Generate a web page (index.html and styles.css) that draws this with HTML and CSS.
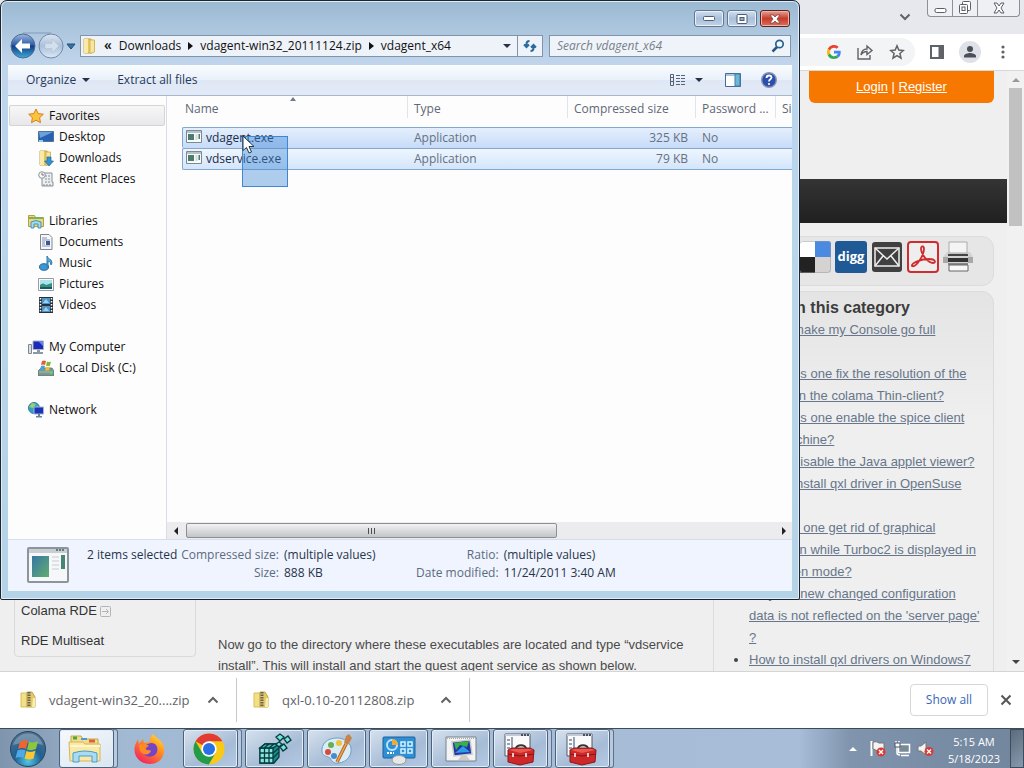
FILE: index.html
```html
<!DOCTYPE html>
<html lang="en">
<head>
<meta charset="utf-8">
<title>vdagent_x64</title>
<link rel="stylesheet" href="styles.css">
</head>
<body>
<div class="desktop">
  <main class="browser">
    <header class="tabstrip">
      <button class="tab-search" aria-label="Search tabs"><svg width="12" height="8" viewBox="0 0 12 8"><path d="M1.500 1.500 6 6l4.500-4.500" fill="none" stroke="#5f6368" stroke-width="2"/></svg></button>
      <div class="caption-chrome">
        <button aria-label="Minimize"><svg width="13" height="16" viewBox="0 0 13 16"><rect x="1" y="8.500" width="11" height="4" rx="1.500" fill="#fff" stroke="#5a5f68"/></svg></button>
        <button aria-label="Restore"><svg width="14" height="16" viewBox="0 0 14 16"><g fill="#fff" stroke="#5a5f68"><rect x="4.500" y="1.500" width="8" height="9" rx="1"/><rect x="1.500" y="4.500" width="8" height="9" rx="1"/><rect x="4" y="7" width="3" height="3.500"/></g></svg></button>
        <button aria-label="Close"><svg width="14" height="16" viewBox="0 0 14 16"><path d="M2 3h3l2 3 2-3h3L9 8l3 5H9l-2-3-2 3H2l3-5z" fill="#fff" stroke="#5a5f68"/></svg></button>
      </div>
    </header>
    <div class="toolbar">
      <div class="omnibox">
        <button aria-label="Google"><svg width="14" height="14" viewBox="0 0 48 48"><path fill="#ea4335" d="M24 9.500c3.500 0 6.700 1.200 9.200 3.600l6.900-6.900A24 24 0 0 0 2.600 13.200l8 6.200A14 14 0 0 1 24 9.500z"/><path fill="#4285f4" d="M47 24.500c0-1.600-.2-3.100-.4-4.500H24v9h13a11 11 0 0 1-4.800 7.200l7.700 6c4.500-4.200 7.100-10.400 7.100-17.700z"/><path fill="#fbbc05" d="M10.500 28.600a14 14 0 0 1 0-9.200l-8-6.200a24 24 0 0 0 0 21.600z"/><path fill="#34a853" d="M24 48c6.500 0 11.900-2.100 15.900-5.800l-7.700-6a14.500 14.500 0 0 1-21.700-7.600l-8 6.200A24 24 0 0 0 24 48z"/></svg></button>
        <button aria-label="Share"><svg width="18" height="18" viewBox="0 0 18 18" fill="none" stroke="#5f6368" stroke-width="1.400"><path d="M2 5v11h12v-4M5 12c.5-4 3-6 6-6V3l5 4.500-5 4v-3c-3 0-4.500 1-6 3.500z"/></svg></button>
        <button aria-label="Bookmark"><svg width="16" height="16" viewBox="0 0 16 16"><path d="m8 1.800 1.800 4.300 4.600.4-3.500 3 1.100 4.600L8 11.600l-4 2.500 1.100-4.600-3.500-3 4.600-.4z" fill="none" stroke="#5f6368" stroke-width="1.500"/></svg></button>
      </div>
      <button class="tool" aria-label="Side panel"><svg width="14" height="14" viewBox="0 0 14 14"><path d="M1 1h12v12H1z" fill="none" stroke="#5f6368" stroke-width="2"/><path d="M8.500 1H13v12H8.500z" fill="#5f6368"/></svg></button>
      <button class="tool avatar" aria-label="Profile"><svg width="14" height="14" viewBox="0 0 14 14" fill="#4a4e57"><circle cx="7" cy="4" r="3"/><path d="M1 12.500V11c0-2 4-3 6-3s6 1 6 3v1.500z"/></svg></button>
      <button class="tool" aria-label="Menu"><svg width="4" height="14" viewBox="0 0 4 14" fill="#5f6368"><circle cx="2" cy="2" r="1.600"/><circle cx="2" cy="7" r="1.600"/><circle cx="2" cy="12" r="1.600"/></svg></button>
    </div>
    <div class="viewport">
      <div class="page">
        <div class="site-head"><div class="login"><a href="#">Login</a> | <a href="#">Register</a></div></div>
        <div class="site-nav"></div>
        <div class="columns">
          <nav class="side-menu"><a href="#">Colama RDE <svg width="11" height="11" viewBox="0 0 11 11" fill="none" stroke="#b4b4b4"><rect x=".5" y=".5" width="10" height="10" rx="1"/><path d="M2 5.500h6M6 3l2.500 2.500L6 8"/></svg></a><a href="#">RDE Multiseat</a></nav>
          <article class="article"><p>Now go to the directory where these executables are located and type “vdservice<br>install”. This will install and start the guest agent service as shown below.</p></article>
          <aside class="aside">
            <div class="share">
              <a href="#" aria-label="Delicious"><svg width="32" height="32" viewBox="0 0 32 32"><rect width="32" height="32" rx="3" fill="#d5d3d1"/><path d="M0 16V3a3 3 0 0 1 3-3h13v16z" fill="#fff"/><path d="M16 0h13a3 3 0 0 1 3 3v13H16z" fill="#4a8ae0"/><path d="M0 16h16v16H3a3 3 0 0 1-3-3z" fill="#222"/><rect x=".5" y=".5" width="31" height="31" rx="3" fill="none" stroke="#999" opacity=".5"/></svg></a>
              <a class="digg" href="#">digg</a>
              <a href="#" aria-label="Email"><svg width="32" height="32" viewBox="0 0 32 32"><rect x="1" y="1" width="30" height="30" rx="3" fill="#404040"/><g fill="none" stroke="#eee" stroke-width="1.500"><rect x="4" y="7" width="24" height="18"/><path d="m4 7 12 11L28 7M4 25l8-10M28 25l-8-10"/></g></svg></a>
              <a href="#" aria-label="PDF"><svg width="32" height="32" viewBox="0 0 32 32" fill="none" stroke="#d02c30"><rect x="1" y="1" width="30" height="30" rx="3" fill="#eee" stroke-width="2"/><path d="M5 25c-1-3 9-7 17-7 7 0 7 4 4 4-5 0-12-9-12-14 0-4 3-3 3 0 0 6-8 19-12 17z" stroke-width="1.800"/></svg></a>
              <a href="#" aria-label="Print"><svg width="32" height="32" viewBox="0 0 32 32"><path d="M4 11h23l3 5v6H0v-6z" fill="#d2d2d2"/><path d="M0 16h5v6H0zM25 16h5v6h-5z" fill="#a8a8a8"/><path d="M6 1h18v11H6z" fill="#f4f4f4" stroke="#aaa"/><path d="M5 13h20v2H5z" fill="#444"/><path d="M5 17h20v4H5z" fill="#333"/><path d="M5 22h20v2H5z" fill="#888"/><path d="M6 24h19v6H6z" fill="#f8f8f8" stroke="#666"/></svg></a>
            </div>
            <section class="category">
              <h2>More in this category</h2>
              <ul>
                <li><a href="#">How to make my Console go full<br>screen?</a></li>
                <li><a href="#">How does one fix the resolution of the<br>screen on the colama Thin-client?</a></li>
                <li><a href="#">How does one enable the spice client<br>on a machine?</a></li>
                <li><a href="#">How to disable the Java applet viewer?</a></li>
                <li><a href="#">How to install qxl driver in OpenSuse<br>Linux?</a></li>
                <li><a href="#">How can one get rid of graphical<br>corruption while Turboc2 is displayed in<br>full screen mode?</a></li>
                <li><a href="#">Why the new changed configuration<br>data is not reflected on the 'server page'<br>?</a></li>
                <li><a href="#">How to install qxl drivers on Windows7</a></li>
              </ul>
            </section>
          </aside>
        </div>
      </div>
      <div class="page-scroll"><i class="arrow up"></i><div class="page-thumb"></div><i class="arrow down"></i></div>
    </div>
    <footer class="downloads">
      <div class="download"><svg class="zip" width="16" height="18"><use href="#zip"/></svg><span>vdagent-win32_20....zip</span><button aria-label="Options"><svg width="12" height="8" viewBox="0 0 12 8"><path d="M1.500 6.500 6 2l4.500 4.500" fill="none" stroke="#5f6368" stroke-width="2"/></svg></button></div>
      <div class="download"><svg class="zip" width="16" height="18"><use href="#zip"/></svg><span>qxl-0.10-20112808.zip</span><button aria-label="Options"><svg width="12" height="8" viewBox="0 0 12 8"><path d="M1.500 6.500 6 2l4.500 4.500" fill="none" stroke="#5f6368" stroke-width="2"/></svg></button></div>
      <button class="show-all">Show all</button>
      <button class="close-bar" aria-label="Close downloads"><svg width="12" height="12" viewBox="0 0 12 12"><path d="m1.500 1.500 9 9m0-9-9 9" stroke="#555" stroke-width="2"/></svg></button>
    </footer>
  </main>

  <footer class="taskbar">
    <button class="start" aria-label="Start"><svg width="38" height="38" viewBox="0 0 38 38"><defs><radialGradient id="orb" cx=".5" cy=".85" r=".85"><stop offset="0" stop-color="#4fc8e8"/><stop offset=".45" stop-color="#1f6193"/><stop offset="1" stop-color="#53728f"/></radialGradient></defs><circle cx="19" cy="19" r="17.500" fill="url(#orb)" stroke="#28445f"/><path d="M4 15a15.500 15.500 0 0 1 30 0q-15-5-30 0z" fill="#fff" opacity=".25"/><path d="M11 12q4-3 8-1l-2 8q-4-2-8 0z" fill="#f1642c"/><path d="M20 11.500q4 2 9-.5l-2 8q-4 2-9 .5z" fill="#8cc63f"/><path d="M8.500 20.500q4-2 8 0l-2 7.500q-4-2-8 0z" fill="#4fa9e8"/><path d="M17.500 21q5 2 9-.5l-2 8q-4 2-9 0z" fill="#fbc730"/></svg></button>
    <button class="task open stacked" aria-label="Explorer"><svg width="36" height="32" viewBox="0 0 36 32"><path d="M4 3h10l2 3h15v10H4z" fill="#f1dc8c" stroke="#c9a84c"/><path d="M6 5h4" stroke="#4ba83f" stroke-width="3"/><path d="M14 6h6" stroke="#4a9bd9" stroke-width="2"/><path d="M22 8h6" stroke="#d9633c" stroke-width="3"/><path d="M2 9h14l2 2h15v17H3z" fill="#f9e9a3" stroke="#d6b759"/><path d="M3 13h30" stroke="#fff6cf" stroke-width="2"/><path d="M6 29v-9q12-4 24 0v9h-5v-6H12v6z" fill="#a9dcf4" stroke="#4a9bc9"/></svg></button>
    <button class="task plain" aria-label="Firefox"><svg width="32" height="32" viewBox="0 0 32 32"><defs><linearGradient id="fox" x1="1" y1="0" x2=".3" y2="1"><stop offset="0" stop-color="#fff04a"/><stop offset=".4" stop-color="#ff9a20"/><stop offset="1" stop-color="#f3265c"/></linearGradient></defs><path d="M20 1c2 3 7 5 10 10 4 11-3 20-13 20C6 31-2 21 3 10l2-4 1 5 4-5 1 4 6-1c-1-3 1-6 3-8z" fill="url(#fox)"/><path d="M15 11c6-3 11 2 9 8-2 5-10 7-14 1 4 1 7-1 8-3-3 1-6-1-8-3 1-2 3-3 5-3z" fill="#7244c8"/><path d="M6 12q6-3 10 1c-3 1-4 3-3 4l5 1c-2 5-8 4-11 0" fill="#ff8b25"/></svg></button>
    <button class="task stacked" aria-label="Chrome"><svg width="32" height="32" viewBox="0 0 32 32"><circle cx="16" cy="16" r="15.500" fill="#f9c916"/><path d="M16 16 2.500 8.300A15.500 15.500 0 0 1 29.500 8.300H16z" fill="#e13d32"/><path d="M2.500 8.300A15.500 15.500 0 0 0 15.800 31.500L22.500 20 16 16 9.300 20z" fill="#239b4d"/><circle cx="16" cy="16" r="7.700" fill="#fff"/><circle cx="16" cy="16" r="6" fill="#2870e4"/></svg></button>
    <button class="task" aria-label="Registry Editor"><svg width="34" height="32" viewBox="0 0 34 32" stroke="#083b3d" stroke-width="1.300"><path d="M2 15l5-4h14v13l-5 6H2z" fill="#178d8d"/><path d="M2 15h13v15H2z" fill="#83e7df"/><path d="M6.500 15v15M11 15v15M2 20h13M2 25h13"/><path d="m2 15 5-4h14l-6 4zM15 20l6-5M15 25l6-6M6 15l5-4M11 15l5-4" fill="#45bcb8"/><path d="m18 4 4-3 4 3-4 4zM26 6l4-3 3 4-4 3zM22 14l4-3 3 4-4 3zM18 11l3-2 3 2-3 3z" fill="#76e4df"/></svg></button>
    <button class="task" aria-label="Paint"><svg width="36" height="32" viewBox="0 0 36 32"><path d="M18 5C8 5 2 11 3 19c1 5 6 4 8 6 2 3 3 6 9 5 8-1 13-8 12-15-1-6-7-10-14-10z" fill="#dcecf6" stroke="#6ba1c4"/><circle cx="9" cy="19" r="3" fill="#d84b39"/><circle cx="12" cy="12" r="3" fill="#65af54"/><circle cx="20" cy="10" r="3" fill="#efc33c"/><circle cx="15" cy="23" r="3" fill="#438ccd"/><path d="m18 29 9-18" stroke="#b26628" stroke-width="3.500"/><path d="m18 29 9-18" stroke="#f1a850" stroke-width="1.500"/><path d="m25 10 2-7 3-2 3 4-4 7z" fill="#c88448"/></svg></button>
    <button class="task" aria-label="Control Panel"><svg width="36" height="32" viewBox="0 0 36 32"><rect x="2" y="4" width="32" height="21" rx="1" fill="#2e8fd2" stroke="#1b629f"/><circle cx="11" cy="12" r="5" fill="none" stroke="#b9e7fa" stroke-width="2"/><path d="M11 12V6a6 6 0 0 1 6 6z" fill="#f4a736"/><g fill="none" stroke="#d6f2ff" stroke-width="1.500"><path d="M20 9h4v4h-4zM27 9h4v4h-4zM20 16h4v4h-4zM27 16h4v4h-4z"/></g><path d="M6 20h7" stroke="#fff" stroke-dasharray="2 1" stroke-width="2"/><ellipse cx="18" cy="27" rx="7" ry="4.500" fill="#e7e7e5" stroke="#919ba2"/></svg></button>
    <button class="task" aria-label="Display"><svg width="32" height="30" viewBox="0 0 32 30"><path d="M1 3h30v24H1z" fill="#f3f4f2" stroke="#74838e"/><path d="M2 4.500h28" stroke="#aaa" stroke-dasharray="1 1"/><path d="m7 8 18-2 2 14-18 2z" fill="#2433a8" stroke="#c9c9c9" stroke-width="1.500"/><path d="m9 9 15-2-2 6-7-2-4 5z" fill="#38af48"/><path d="m10 19 8-7 7 6z" fill="#2d9ce6"/><path d="m16 22-3 4h12l-4-5z" fill="#ccc"/></svg></button>
    <button class="task stacked" aria-label="Tools"><svg width="32" height="34"><use href="#toolbox"/></svg></button>
    <button class="task stacked" aria-label="Tools"><svg width="32" height="34"><use href="#toolbox"/></svg></button>
    <div class="tray">
      <button class="tray-up" aria-label="Hidden icons"><i></i></button>
      <button aria-label="Action center"><svg width="18" height="18" viewBox="0 0 18 18"><path d="M2.500 1v15" stroke="#fff" stroke-width="2"/><path d="M4 2q4-1 6 1h5v8H9L4 9z" fill="#f4f4f4" stroke="#777"/><circle cx="12" cy="12" r="4.500" fill="#d63c37"/><path d="m10 10 4 4m0-4-4 4" stroke="#fff" stroke-width="1.400"/></svg></button>
      <button aria-label="Network"><svg width="18" height="18" viewBox="0 0 18 18"><path d="M5.500 4.500h11v8h-11z" fill="#7b8b95" stroke="#fff" stroke-width="1.500"/><path d="M8 15.500h8M3 1v3M6 1v3M4 7v6q0 2 3 2" stroke="#fff" stroke-width="1.500" fill="none"/><path d="M2 3h5v4H2z" fill="#fff" stroke="#465463"/></svg></button>
      <button aria-label="Volume muted"><svg width="18" height="18" viewBox="0 0 18 18"><path d="M1 6h3l5-4v13l-5-4H1z" fill="#f4f4f4" stroke="#777"/><circle cx="12" cy="11.500" r="4.500" fill="#d63c37"/><path d="m10 9.500 4 4m0-4-4 4" stroke="#fff" stroke-width="1.400"/></svg></button>
    </div>
    <div class="clock">5:15 AM<br>5/18/2023</div>
    <button class="show-desktop" aria-label="Show desktop"></button>
  </footer>

  <section class="explorer">
    <div class="titlebar">
      <button aria-label="Minimize"><svg width="12" height="6" viewBox="0 0 12 6"><rect x=".5" y=".5" width="11" height="4" rx="1" fill="#fff" stroke="#4e5d77"/></svg></button>
      <button aria-label="Maximize"><svg width="12" height="10" viewBox="0 0 12 10"><rect x="1" y=".5" width="10" height="9" rx="1" fill="#fff" stroke="#4e5d77"/><rect x="4" y="3.500" width="4" height="3" fill="#8fb0d0" stroke="#4e5d77"/></svg></button>
      <button class="close" aria-label="Close"><svg width="12" height="10" viewBox="0 0 12 10"><path d="M1 1h3l2 2 2-2h3L8 5l3 4H8L6 7 4 9H1l3-4z" fill="#fff" stroke="#6b3b41" stroke-width=".7"/></svg></button>
    </div>
    <div class="address-row">
      <svg class="travel" width="68" height="28" viewBox="0 0 68 28"><defs><linearGradient id="back" x1="0" y1="0" x2="0" y2="1"><stop offset="0" stop-color="#9fb8de"/><stop offset=".45" stop-color="#2f5da6"/><stop offset=".5" stop-color="#123d83"/><stop offset="1" stop-color="#3cacd8"/></linearGradient><linearGradient id="fwd" x1="0" y1="0" x2="0" y2="1"><stop offset="0" stop-color="#dce6f2"/><stop offset=".5" stop-color="#abc0da"/><stop offset="1" stop-color="#dce8f5"/></linearGradient></defs><path d="M14 1h28" stroke="#7f9bb9"/><circle cx="14" cy="14" r="12" fill="url(#back)" stroke="#536c91"/><path d="m6 14 7-7v4.500h8v5h-8V21z" fill="#fff"/><circle cx="42" cy="14" r="12" fill="url(#fwd)" stroke="#7289a8"/><path d="m50 14-7-7v4.500h-7v5h7V21z" fill="#d3dfed" stroke="#b2c2d5" stroke-width=".6"/><path d="M58 12h8l-4 5z" fill="#3276a5" stroke="#244d73"/></svg>
      <div class="address">
        <svg width="16" height="16" viewBox="0 0 16 16"><use href="#folder"/></svg><b class="chev">«</b><a href="#">Downloads</a><i class="tri-r"></i><a href="#">vdagent-win32_20111124.zip</a><i class="tri-r"></i><a href="#">vdagent_x64</a><i class="tri-d"></i>
        <button class="refresh" aria-label="Refresh"><svg width="14" height="14" viewBox="0 0 14 14" fill="none" stroke="#2a6a9d" stroke-width="2"><path d="M6.500 2q-3 0-3 3v3M1 5.500 3.500 8 6 5.500M7.500 12q3 0 3-3V6M8 8.500 10.500 6 13 8.500"/></svg></button>
      </div>
      <div class="search"><input type="text" placeholder="Search vdagent_x64" aria-label="Search vdagent_x64"><svg width="14" height="14" viewBox="0 0 14 14" fill="none"><path d="m6 8-4.500 4.500" stroke="#29577f" stroke-width="2.500"/><circle cx="8.500" cy="5" r="3.700" fill="#eff9fe" stroke="#29608f" stroke-width="1.700"/></svg></div>
    </div>
    <div class="client">
      <div class="commands">
        <button>Organize<i class="tri-d"></i></button><button>Extract all files</button>
        <button class="views" aria-label="Views"><svg width="17" height="14" viewBox="0 0 17 14" fill="none" stroke="#52637a"><path d="M1.500 1.500h3v11h-3z"/><path d="M1 4.500h4M1 8.500h4M7 2.500h9M7 5.500h9M7 8.500h9M7 11.500h9" stroke-dasharray="4 1"/></svg><i class="tri-d"></i></button>
        <button aria-label="Preview pane"><svg width="16" height="14" viewBox="0 0 16 14"><path d="M.5.5h15v13H.5z" fill="#fff" stroke="#476b91"/><path d="M1 2h14" stroke="#a9c4dc" stroke-width="2"/><path d="M10 1h5v12h-5z" fill="#6cb7d7" stroke="#3e7fa7"/></svg></button>
        <button aria-label="Help"><svg width="16" height="16" viewBox="0 0 16 16"><circle cx="8" cy="8" r="7.300" fill="#2c4fae" stroke="#8796b2" stroke-width="1.400"/><path d="M5.500 6c0-3.500 5-3 5-.5C10.500 7.500 8 7 8 9.500" fill="none" stroke="#fff" stroke-width="1.800"/><circle cx="8" cy="12" r="1.100" fill="#fff"/></svg></button>
      </div>
      <div class="panes">
        <nav class="tree">
          <a class="root selected" href="#"><svg width="16" height="16" viewBox="0 0 16 16"><path d="m8 1 2.200 4.600 5.100.6-3.700 3.500.9 5L8 12.200l-4.500 2.500.9-5L.7 6.200l5.100-.6z" fill="#fac43b" stroke="#d87f22"/></svg>Favorites</a>
          <a href="#"><svg width="16" height="16" viewBox="0 0 16 16"><path d="M.5 2.500h15v10H.5z" fill="#2860b4" stroke="#56738e"/><path d="M1 3h14L2 9z" fill="#6aa0df"/><path d="M1 12h4" stroke="#8dd3ee" stroke-width="2"/></svg>Desktop</a>
          <a href="#"><svg width="16" height="16" viewBox="0 0 16 16"><use href="#folder"/><path d="M9 7h4v4h2.500L11 16l-4.500-5H9z" fill="#3292d2" stroke="#1d679e" stroke-width=".7"/></svg>Downloads</a>
          <a href="#"><svg width="16" height="16" viewBox="0 0 16 16"><path d="M4 2h10v9h1v4H4z" fill="#eee" stroke="#87919a"/><path d="M7 5h5M7 8h5M7 11h5M5 14h9" stroke="#80909b" stroke-dasharray="2 1"/><circle cx="4" cy="4" r="3.300" fill="#f6f6f6" stroke="#8a969f"/><path d="M4 2v2h2" fill="none" stroke="#777"/></svg>Recent Places</a>
          <a class="root group" href="#"><svg width="16" height="16" viewBox="0 0 16 16"><path d="M.5 2.500h6l1 2h8v9H.5z" fill="#f2d775" stroke="#b99b49"/><path d="M1 5h14" stroke="#72b460" stroke-width="2"/><path d="M3 15V9q5-3 10 0v6h-3v-4H6v4z" fill="#9bdcf0" stroke="#4492b7"/></svg>Libraries</a>
          <a href="#"><svg width="16" height="16" viewBox="0 0 16 16"><path d="M2.500.5H11l3 3v12H2.500z" fill="#f6f8fb" stroke="#7e8790"/><path d="M4 4h5M4 6h8M4 8h3M4 10h3M4 12h8" stroke="#8294b0"/><path d="M8 7h4v4H8z" fill="#3d5796"/></svg>Documents</a>
          <a href="#"><svg width="16" height="16" viewBox="0 0 16 16"><ellipse cx="6" cy="12" rx="4.500" ry="3.300" fill="#3b98d1" stroke="#266b9f"/><path d="M9 12V1q1 3 4 4 2 3 0 5 0-4-3-4v6z" fill="#5ab3df" stroke="#2f7dad"/></svg>Music</a>
          <a href="#"><svg width="16" height="16" viewBox="0 0 16 16"><path d="M.5 2.500h15v12H.5z" fill="#fff" stroke="#929da4"/><path d="M2 4h12v9H2z" fill="#a9e2f0"/><path d="M2 9q3-3 6 0l6-2v6H2z" fill="#3a9072"/><path d="M2 11h12v2H2z" fill="#175870"/></svg>Pictures</a>
          <a href="#"><svg width="16" height="16" viewBox="0 0 16 16"><path d="M1 0h14v16H1z" fill="#26333d"/><path d="M4 1h8v6H4zM4 9h8v6H4z" fill="#4f94c8"/><path d="M2.500 1v14M13.500 1v14" stroke="#fff" stroke-width="1.500" stroke-dasharray="1.500 1.500"/><path d="m5 6 3-4 3 4zM5 14l3-4 3 4z" fill="#9cd2e9"/></svg>Videos</a>
          <a class="root group" href="#"><svg width="16" height="16" viewBox="0 0 16 16"><path d="M.5 5.500h3v9h-3z" fill="#ddd" stroke="#7c8992"/><path d="M5 2h10.500v8.500H5z" fill="#1b29bd" stroke="#aab3b9"/><path d="M10 2h5v5z" fill="#6d82ef"/><path d="M9 11h3v2h3v2H5v-2h4z" fill="#8a99a6"/></svg>My Computer</a>
          <a href="#"><svg width="16" height="16" viewBox="0 0 16 16"><path d="M3 8h11l2 3v5H0v-5z" fill="#7d9790" stroke="#536f68" stroke-width=".7"/><path d="M1 12h14" stroke="#a4bbb4"/><path d="M4 1q2-1 4 0L7 5q-2-1-4 0z" fill="#e65d32"/><path d="M9 1.500q2 1 4 0l-1 4q-2 1-4 0z" fill="#7bb93e"/><path d="M3 6q2-1 4 0l-1 4H2z" fill="#46a2dc"/><path d="M8 6.500q2 1 4 0l-1 4H7z" fill="#f1bf32"/><path d="M12 13h2" stroke="#49e05d" stroke-width="2"/></svg>Local Disk (C:)</a>
          <a class="root group" href="#"><svg width="16" height="16" viewBox="0 0 16 16"><circle cx="6" cy="6" r="5.500" fill="#3b9ec3" stroke="#297e9b"/><path d="M1 5l3-4 4 1-3 4zM7 7l3-3v4z" fill="#96d36c"/><path d="M6 5h9.500v7H6z" fill="#1b33bc" stroke="#a1b6cc"/><path d="M10 12h2v2h2v1.500H8V14h2z" fill="#6c819d"/></svg>Network</a>
        </nav>
        <div class="files">
          <table>
            <colgroup><col class="c-name"><col class="c-type"><col class="c-size"><col class="c-pass"><col></colgroup>
            <thead><tr><th><i class="sort"></i>Name</th><th>Type</th><th>Compressed size</th><th>Password ...</th><th>Si</th></tr></thead>
            <tbody>
              <tr><td><svg width="16" height="14"><use href="#exe"/></svg>vdagent.exe</td><td>Application</td><td class="num">325 KB</td><td>No</td><td></td></tr>
              <tr><td><svg width="16" height="14"><use href="#exe"/></svg>vdservice.exe</td><td>Application</td><td class="num">79 KB</td><td>No</td><td></td></tr>
            </tbody>
          </table>
          <div class="marquee"></div>
          <svg class="pointer" width="13" height="20" viewBox="0 0 13 20"><path d="M1 1v14.500l3.500-3L7 18l2.500-1-2.500-5.500h5z" fill="#fff" stroke="#263442"/></svg>
          <div class="hscroll"><i class="arrow left"></i><div class="thumb"><i></i><i></i><i></i></div><i class="arrow right"></i></div>
        </div>
      </div>
      <div class="details">
        <svg width="42" height="36" viewBox="0 0 42 36"><defs><linearGradient id="scr" x1="0" y1="0" x2="1" y2="1"><stop offset="0" stop-color="#3776a5"/><stop offset="1" stop-color="#62ad70"/></linearGradient></defs><rect x="1" y="1" width="40" height="34" rx="1" fill="#f6f7f8" stroke="#8b969c" stroke-width="2"/><path d="M2 4h38" stroke="#c9ced3" stroke-width="4"/><path d="M29 3h9" stroke="#6b757d" stroke-width="2" stroke-dasharray="2 1"/><path d="M5 9h17v21H5z" fill="url(#scr)"/><path d="M25 10h7M25 14h7M25 18h7M25 22h7" stroke="#c8cdd0"/><path d="M34 8h4v14h-4z" fill="#478677"/></svg>
        <strong>2 items selected</strong>
        <dl><dt>Compressed size:</dt><dd>(multiple values)</dd><dt>Size:</dt><dd>888 KB</dd></dl>
        <dl class="second"><dt>Ratio:</dt><dd>(multiple values)</dd><dt>Date modified:</dt><dd>11/24/2011 3:40 AM</dd></dl>
      </div>
    </div>
  </section>
</div>
<svg class="defs" width="0" height="0" aria-hidden="true"><defs>
  <symbol id="folder" viewBox="0 0 16 16"><path d="M2 1h7l1 2v12H2z" fill="#e8c65e" stroke="#c7a446"/><path d="M8 2h4.500v12L8 15.500z" fill="#f7e69f" stroke="#d5b75a"/><path d="M2 1h4v14H2z" fill="#f9e9aa"/></symbol>
  <symbol id="zip" viewBox="0 0 16 18"><path d="M1 2h6v14H1z" fill="#f4df85" stroke="#d8bf5d"/><path d="M7 1h5l3 5v10H7z" fill="#e4c862" stroke="#c5a947"/><path d="M9 1v14" stroke="#626262" stroke-width="3" stroke-dasharray="1.500 1"/><path d="M13 7h2v9h-3z" fill="#f9eeb2"/></symbol>
  <symbol id="exe" viewBox="0 0 16 14"><path d="M.5.5h15v12H.5z" fill="#fafafa" stroke="#7b8990"/><path d="M1 2h14" stroke="#b7c0c7" stroke-width="2"/><path d="M2 4h6v6H2z" fill="#4c7b70"/><path d="M9.500 5h2M9.500 7h2M9.500 9h2" stroke="#adb9bd"/><path d="M12.500 4h1.500v5h-1.500z" fill="#4c7b70"/></symbol>
  <symbol id="toolbox" viewBox="0 0 32 34"><path d="M2 2h25v22H2z" fill="#fafafa" stroke="#4f5b68"/><path d="M2 3h25" stroke="#c3cad2" stroke-width="2"/><path d="M18 3h8" stroke="#45515e" stroke-width="2" stroke-dasharray="2 1"/><path d="M4 8h3M4 12h3M4 16h3M9 5v16" stroke="#7185a0" stroke-width="1.500"/><path d="M13 17c0-5 10-5 10 0" fill="none" stroke="#333" stroke-width="2"/><path d="m5 18 4-2h18l4 2-1 12-13 3-12-3z" fill="#cf2828" stroke="#8c1719"/><path d="m5 22 12 2 14-2" fill="none" stroke="#871214"/><path d="m6 18 4-1h17l3 1-13 3z" fill="#e65a50"/><path d="M10 21v4M23 21v4" stroke="#fff" stroke-width="1.500"/></symbol>
</defs></svg>
</body>
</html>
```
FILE: styles.css
```css
* { box-sizing: border-box; }
body { margin: 0; font: 12px/16px "Open Sans", "Noto Sans", sans-serif; color: #111; }
button { font: inherit; color: inherit; background: none; border: 0; padding: 0; display: flex; align-items: center; justify-content: center; }
a { color: inherit; text-decoration: none; }
svg { flex: none; }
.defs { position: absolute; }
.desktop { position: relative; height: 100vh; display: flex; flex-direction: column; overflow: hidden; }
.browser { flex: 1; min-height: 0; display: flex; flex-direction: column; background: #efefef; }

/* Browser chrome */
.tabstrip { height: 34px; background: #e7e8ee; display: flex; justify-content: flex-end; align-items: flex-start; padding-right: 4px; gap: 16px; }
.tab-search { height: 34px; }
.caption-chrome { display: flex; height: 17px; border: 1px solid #8a8f98; border-top: 0; border-radius: 0 0 4px 4px; background: #eef0f4; }
.caption-chrome button { width: 25px; border-right: 1px solid #8a8f98; }
.caption-chrome button:last-child { width: 41px; border: 0; }
.toolbar { height: 37px; background: #fff; display: flex; align-items: center; justify-content: flex-end; border-bottom: 1px solid #d8d8d8; padding-right: 19px; gap: 15px; }
.omnibox { height: 28px; width: 330px; background: #f3f4f5; border-radius: 14px; display: flex; align-items: center; justify-content: flex-end; gap: 15px; padding-right: 10px; }
.avatar { width: 22px; height: 22px; border-radius: 50%; background: #dfe1e8; }
.toolbar .tool:last-child { margin-left: 5px; }

/* Web page */
.viewport { flex: 1; min-height: 0; display: flex; overflow: hidden; }
.page { flex: 1; min-width: 0; overflow: hidden; font: 13px/22px "Liberation Sans", Arial, sans-serif; }
.site-head { height: 108px; display: flex; justify-content: flex-end; align-items: flex-start; padding-right: 13px; }
.login { width: 185px; height: 32px; line-height: 32px; background: #f77800; color: #fff; text-align: center; border-radius: 0 0 6px 6px; }
.login a, .category a { text-decoration: underline; }
.site-nav { height: 44px; background: linear-gradient(#343434, #202020); }
.columns { display: grid; grid-template-columns: 182px 1fr 281px; grid-template-rows: 435px; padding: 13px 13px 0 14px; }
.side-menu { align-self: end; margin-bottom: 14px; height: 120px; border: 1px solid #dadada; border-radius: 4px; padding: 58px 6px 0; line-height: 30px; display: flex; flex-direction: column; color: #333; }
.side-menu svg { vertical-align: -2px; }
.article { padding: 398px 0 0 22px; line-height: 21px; color: #4a4a4a; white-space: nowrap; }
.article p { margin: 0; }
.share { height: 50px; border: 1px solid #dcdcdc; border-radius: 12px; background: #e6e6e6; display: flex; justify-content: flex-end; gap: 4px; padding: 4px 18px 0 0; }
.share a { height: 32px; display: flex; }
.share .digg { width: 32px; background: #205a96; border-radius: 3px; color: #fff; font: bold 13px/30px "Open Sans", sans-serif; justify-content: center; }
.category { margin-top: 5px; height: 400px; border: 1px solid #dcdcdc; border-radius: 12px; background: linear-gradient(#e4e4e4, #efefef 130px); padding: 5px 0 0 35px; color: #67768a; white-space: nowrap; }
.category h2 { margin: 0; font-size: 16px; line-height: 22px; color: #3c3c3c; }
.category ul { margin: 0; padding: 0; }
.category li::marker { color: #444; }
.page-scroll { width: 17px; background: #f1f1f1; display: flex; flex-direction: column; align-items: center; padding: 7px 0; }
.page-thumb { width: 13px; height: 138px; background: #c1c1c1; margin: 6px 0 auto; }
.arrow { width: 0; height: 0; border: 4px solid transparent; flex: none; }
.up { border-top: 0; border-bottom-color: #999; }
.down { border-bottom: 0; border-top-color: #444; }
.left { border-left: 0; border-right-color: #222; }
.right { border-right: 0; border-left-color: #222; }

/* Downloads */
.downloads { height: 57px; background: #fff; border-top: 1px solid #d4d4d4; display: flex; align-items: center; padding-right: 12px; font-size: 13px; color: #5f6368; }
.download { height: 44px; display: flex; align-items: center; border-right: 1px solid #c8c8c8; width: 237px; padding: 0 17px 0 20px; }
.download + .download { width: 233px; padding-left: 16px; }
.download span { margin: 0 auto 0 13px; }
.show-all { margin-left: auto; width: 78px; height: 32px; border: 1px solid #d5d7db; border-radius: 4px; color: #3967b8; font-size: 12px; }
.close-bar { margin-left: 12px; }

/* Taskbar */
.taskbar { height: 40px; border-top: 1px solid #3d4a59; display: flex; align-items: stretch; gap: 3px; background: linear-gradient(90deg, #7f95ae, #a2b9d3 12%, #a7bdd8 78%, #8094ad 83%, #71869d); }
.start { width: 56px; }
.task { width: 59px; border: 1px solid #4d6179; border-radius: 3px; background: linear-gradient(150deg, #d6e1ee, #a6bcd6 60%, #b4cae4); box-shadow: inset 0 0 0 1px #e3edf8; }
.stacked { width: 55px; margin-right: 4px; padding-right: 4px; box-shadow: inset 0 0 0 1px #e3edf8, 4px 0 0 -1px #b7cae1, 4px 0 0 0 #5d718a; }
.task.open { background: linear-gradient(150deg, #f6f9fc, #dae5f1); }
.task.plain { border: 0; background: none; box-shadow: none; padding-right: 4px; }
.tray { margin-left: auto; display: flex; align-items: center; gap: 6px; }
.tray-up { margin-right: 6px; }
.tray-up i { border: 4px solid transparent; border-top: 0; border-bottom-color: #fff; }
.clock { width: 66px; margin-left: 3px; text-align: center; color: #fff; font-size: 11px; line-height: 17px; padding-top: 4px; }
.show-desktop { width: 14px; border: 1px solid #3e4c5c; background: linear-gradient(135deg, #5b6b7c, #8799ad); }

/* Explorer window */
.explorer { position: absolute; left: 0; top: 0; width: 800px; height: 600px; display: flex; flex-direction: column; border: 1px solid #1d2530; border-radius: 7px 7px 2px 2px; padding: 0 7px 8px; background: linear-gradient(#9bb9d2, #c0d5ec 62px, #bbd6ec 120px, #b5d3e7); box-shadow: inset 0 0 0 1px #e1eefa; color: #111; }
.titlebar { height: 33px; display: flex; justify-content: flex-end; gap: 3px; padding: 9px 2px 0 0; }
.titlebar button { width: 30px; height: 17px; border: 1px solid #64778f; border-radius: 3px; background: linear-gradient(#d2dfee, #a9c0da 50%, #c1d3e7); box-shadow: inset 0 0 0 1px #e8f1fa; }
.titlebar .close { border-color: #5c2222; background: linear-gradient(#e7a297, #c63c2a 50%, #d8705a); box-shadow: inset 0 0 0 1px #efb4a8; }
.address-row { height: 31px; display: flex; align-items: flex-start; padding: 1px 1px 0 0; }
.travel { margin: -3px 3px 0 1px; }
.address { flex: 1; height: 22px; display: flex; align-items: center; border: 1px solid #8095ac; background: #eef3fa; padding-left: 1px; }
.address a { white-space: nowrap; }
.chev { margin: 0 7px 2px 6px; font-size: 14px; font-weight: 600; }
.tri-r { border: 4px solid transparent; border-left: 5px solid #111; border-right: 0; margin: 0 7px; }
.tri-d { border: 4px solid transparent; border-top: 4px solid #253248; border-bottom: 0; }
.address .tri-d { margin: 0 6px 0 auto; }
.refresh { width: 25px; height: 20px; border-left: 1px solid #8095ac; }
.search { width: 242px; height: 22px; margin-left: 6px; border: 1px solid #8095ac; background: #eff4fa; display: flex; align-items: center; padding: 0 5px 0 7px; }
.search input { flex: 1; min-width: 0; border: 0; padding: 0; background: none; font: italic 12px/16px "Open Sans", "Noto Sans", sans-serif; }
.search input::placeholder { color: #777f89; opacity: 1; }
.client { flex: 1; min-height: 0; display: flex; flex-direction: column; background: #fdfdfe; }
.commands { height: 31px; display: flex; align-items: center; padding: 0 15px 0 18px; background: linear-gradient(#fafdff, #e9f0fa 50%, #dfe7f5 51%, #e3eaf7); border-bottom: 1px solid #a9b7cc; color: #26395b; }
.commands button { margin-right: 27px; gap: 6px; }
.commands .views { margin: 0 22px 0 auto; gap: 9px; }
.commands .views ~ button { margin-right: 20px; }
.commands .views ~ button:last-child { margin-right: 0; }
.panes { flex: 1; min-height: 0; display: flex; }
.tree { width: 159px; border-right: 1px solid #d9dee6; padding: 9px 1px 0; display: flex; flex-direction: column; }
.tree a { height: 21px; display: flex; align-items: center; padding-left: 29px; gap: 5px; white-space: nowrap; }
.tree .root { padding-left: 19px; }
.tree .group { margin-top: 21px; }
.tree .selected { border: 1px solid #d4d4d6; border-radius: 2px; background: linear-gradient(#f7f7f8, #e8e8ea); padding-left: 18px; }
.files { flex: 1; min-width: 0; position: relative; display: flex; flex-direction: column; overflow: hidden; }
.files table { margin-left: 15px; border-collapse: separate; border-spacing: 0; table-layout: fixed; width: 610px; }
.c-name { width: 226px; } .c-type { width: 160px; } .c-size { width: 128px; } .c-pass { width: 80px; }
.files th { font-weight: normal; text-align: left; height: 31px; padding: 0 0 5px 6px; color: #5f6875; white-space: nowrap; overflow: hidden; background: linear-gradient(#e0e5ec, #e0e5ec) right top / 1px 22px no-repeat; }
.files th:first-child { padding-left: 3px; position: relative; }
.files th:last-child { background: none; }
.sort { position: absolute; left: 108px; top: 1px; border: 3px solid transparent; border-top: 0; border-bottom: 4px solid #6d7b8d; }
.files td { height: 21px; padding: 0 0 0 6px; color: #67707e; border-top: 1px solid #84a7cf; background: linear-gradient(#e4effd, #c6dbf9); }
.files td:first-child { color: #1c2d46; border-left: 1px solid #84a7cf; border-radius: 2px 0 0 2px; padding-left: 3px; }
.files tr:last-child td { height: 22px; border-bottom: 1px solid #84a7cf; background: linear-gradient(#eef6ff, #d3e5fb); }
.files td svg { vertical-align: -2px; margin-right: 4px; }
.files td.num { text-align: right; padding-right: 8px; }
.marquee { position: absolute; left: 75px; top: 40px; width: 46px; height: 51px; border: 1px solid #3d87d3; background: rgba(64, 136, 212, .42); }
.pointer { position: absolute; left: 75px; top: 39px; }
.hscroll { margin-top: auto; height: 17px; display: flex; align-items: center; padding: 0 6px 0 7px; background: #ececee; }
.hscroll .thumb { width: 371px; height: 15px; margin: 0 auto 0 8px; border: 1px solid #8c8f94; border-radius: 2px; background: linear-gradient(#f2f2f3, #dadbdd 50%, #c3c5c9); display: flex; align-items: center; justify-content: center; gap: 2px; }
.thumb i { width: 1px; height: 6px; background: #4c4f54; }
.details { height: 52px; border-top: 1px solid #d5dfeb; background: #f0f4fe; display: flex; align-items: flex-start; padding: 7px 0 0 19px; white-space: nowrap; color: #26344c; }
.details strong { width: 94px; margin: 0 0 0 18px; font-weight: normal; }
.details dl { margin: 0; display: grid; grid-template-columns: 98px auto; column-gap: 5px; row-gap: 2px; }
.details .second { margin-left: 25px; }
.details dt { text-align: right; color: #5b6b7e; }
.details dd { margin: 0; }
```
